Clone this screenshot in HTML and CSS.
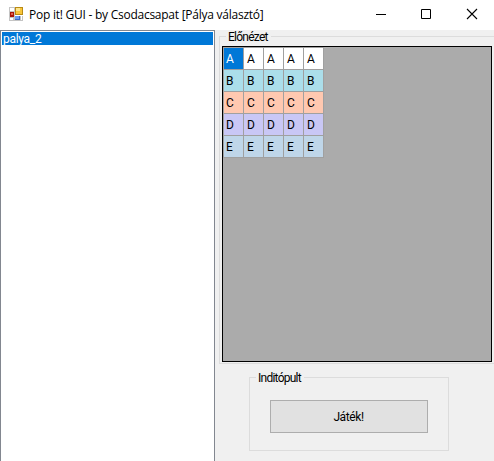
FILE: index.html
```html
<!DOCTYPE html>
<html lang="hu">
<head>
<meta charset="utf-8">
<title>Pop it! GUI</title>
<link rel="stylesheet" href="styles.css">
</head>
<body>
<header class="titlebar">
  <svg class="app-icon" width="14" height="14" viewBox="0 0 14 14" shape-rendering="crispEdges">
    <path fill="#c4c4c4" d="M0 0h6v14H0zM5 9h9v5H5z"/>
    <path fill="#fff" d="M1 1h4v3H1zM1 11h3v2H1z"/>
    <path fill="#a81408" d="M1 5h4v5H1z"/>
    <path fill="#e0604a" d="M2 6h2v2H2z"/>
    <path fill="#b98a14" d="M6 0h8v8H6z"/>
    <path fill="#f8c53a" d="M7 1h6v6H7z"/>
    <path fill="#fde58c" d="M7 1h4v3H7z"/>
    <path fill="#3769c8" d="M6 9h5v4H6z"/>
    <path fill="#6c9df0" d="M6 9h4v3H6z"/>
    <path fill="#fff" d="M12 9h1v4h-1z"/>
  </svg>
  <h1 class="title">Pop it! GUI - by Csodacsapat [Pálya választó]</h1>
  <div class="controls">
    <svg width="46" height="30" viewBox="0 0 46 30"><path d="M16 14.5h10" stroke="#000"/></svg>
    <svg width="46" height="30" viewBox="0 0 46 30"><path d="M15.500 9.500h9v9h-9z" fill="none" stroke="#000"/></svg>
    <svg width="46" height="30" viewBox="0 0 46 30"><path d="M15 9l10 10M25 9L15 19" stroke="#000" stroke-width="1.100"/></svg>
  </div>
</header>
<main class="client">
  <ul class="list"><li class="selected">palya_2</li></ul>
  <div class="side">
    <section class="group preview">
      <h2 class="legend"><span>Előnézet</span></h2>
      <div class="grid-view">
        <table>
          <tr class="row-a"><td class="current">A</td><td>A</td><td>A</td><td>A</td><td>A</td></tr>
          <tr class="row-b"><td>B</td><td>B</td><td>B</td><td>B</td><td>B</td></tr>
          <tr class="row-c"><td>C</td><td>C</td><td>C</td><td>C</td><td>C</td></tr>
          <tr class="row-d"><td>D</td><td>D</td><td>D</td><td>D</td><td>D</td></tr>
          <tr class="row-e"><td>E</td><td>E</td><td>E</td><td>E</td><td>E</td></tr>
        </table>
      </div>
    </section>
    <section class="group launch">
      <h2 class="legend"><span>Inditópult</span></h2>
      <button class="play" type="button">Játék!</button>
    </section>
  </div>
</main>
</body>
</html>
```
FILE: styles.css
```css
* { box-sizing: border-box; }
body {
  margin: 0;
  width: 494px;
  height: 461px;
  overflow: hidden;
  background: #f0f0f0;
  color: #000;
  font: 12px/13px Roboto, "Liberation Sans", sans-serif;
  letter-spacing: -0.5px;
}
.titlebar {
  display: flex;
  height: 30px;
  padding-left: 9px;
  background: #fff;
}
.app-icon { flex: none; margin-top: 7px; }
.title {
  margin: 0 0 0 6px;
  font: 12px/30px "Open Sans", "Noto Sans", sans-serif;
  letter-spacing: -0.25px;
  white-space: nowrap;
}
.controls { display: flex; width: 138px; flex: none; margin-left: auto; margin-right: -4px; }
.controls svg { flex: none; }
.client { display: flex; height: 431px; }
.list {
  width: 215px;
  flex: none;
  margin: 0;
  padding: 1px 1px 0;
  list-style: none;
  background: #fff;
  border: 1px solid #828790;
  border-bottom: 0;
}
.selected {
  height: 13px;
  padding-left: 1px;
  line-height: 14px;
  letter-spacing: -0.3px;
  background: #0078d7;
  color: #fff;
}
.side { width: 279px; padding: 6px 0 0 4px; }
.group { border: 1px solid #dcdcdc; }
.legend {
  height: 0;
  margin: 0;
  font: inherit;
  line-height: 13px;
  letter-spacing: -0.75px;
}
.legend span {
  display: block;
  width: max-content;
  margin-left: 6px;
  padding: 0 3px 0 2px;
  background: #f0f0f0;
  transform: translateY(-6px);
}
.preview { width: 276px; height: 328px; border-right: 0; }
.grid-view {
  width: 270px;
  height: 316px;
  margin: 9px 0 0 2px;
  border: 1px solid #000;
  background: #ababab;
}
table { border-collapse: separate; border-spacing: 0; table-layout: fixed; width: 101px; }
td {
  width: 20px;
  height: 22px;
  padding: 0 0 0 3px;
  border: solid #a0a0a0;
  border-width: 0 1px 1px 0;
  line-height: 16px;
}
td:first-child { width: 21px; padding-left: 2px; border-left-width: 1px; }
.row-a td { height: 23px; border-top-width: 1px; background: #fff; }
.row-a .current { background: #0078d7; color: #fff; }
.row-b td { background: #abdeea; }
.row-c td { background: #ffc8b0; }
.row-d td { background: #c9c7f5; }
.row-e td { background: #bfd6e9; }
.launch { width: 200px; height: 74px; margin: 13px 0 0 30px; }
.play {
  display: block;
  width: 158px;
  height: 33px;
  margin: 22px 0 0 20px;
  padding: 0 1px 0 0;
  border: 1px solid #adadad;
  background: #e1e1e1;
  color: #000;
  font: 12px/14px Roboto, "Liberation Sans", sans-serif;
  letter-spacing: -0.4px;
}
```
